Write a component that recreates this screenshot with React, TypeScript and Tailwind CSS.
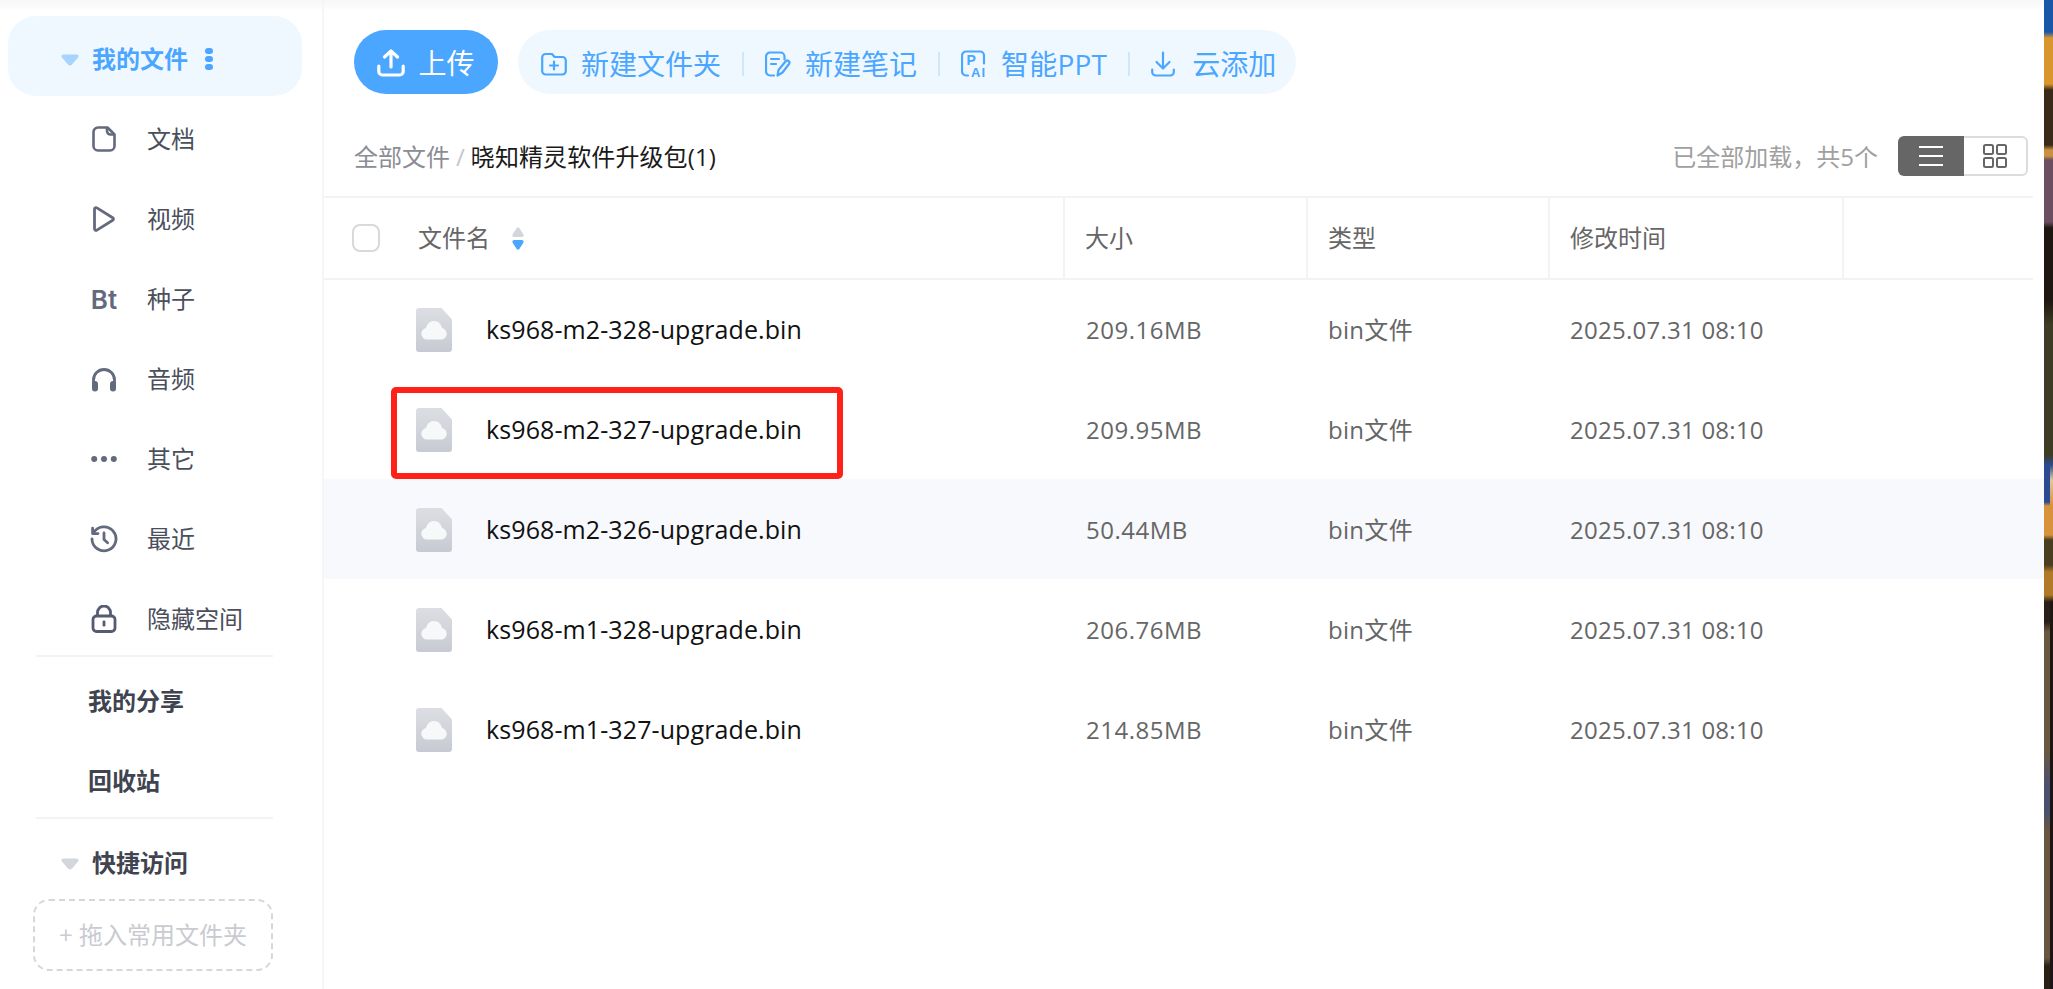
import React from "react";

function Tri({ className }: { className: string }) {
  return (
    <svg width="18" height="12" viewBox="0 0 18 12" className={className}>
      <path d="M2.5 0.5h13c1.8 0 2.6 1.6 1.6 3L11 10.6c-1 1.2-3 1.2-4 0L.9 3.5C-.1 2.1.7.5 2.5.5z" fill="currentColor" />
    </svg>
  );
}

function DocIcon() {
  return (
    <svg width="24" height="26" viewBox="0 0 24 26" fill="none" stroke="#646a7d" strokeWidth="2.6" strokeLinejoin="round">
      <path d="M6 1.5h9.5l7 7V20a4.5 4.5 0 0 1-4.5 4.5H6A4.5 4.5 0 0 1 1.5 20V6A4.5 4.5 0 0 1 6 1.5z" />
      <path d="M15 1.5V5a3.5 3.5 0 0 0 3.5 3.5H22.5" />
    </svg>
  );
}
function PlayIcon() {
  return (
    <svg width="24" height="26" viewBox="0 0 24 26" fill="none" stroke="#646a7d" strokeWidth="2.8" strokeLinejoin="round">
      <path d="M2.5 3.2c0-1.3 1.4-2 2.4-1.3l15.8 9.8c1 .6 1 2 0 2.6L4.9 24.1c-1 .7-2.4 0-2.4-1.3z" />
    </svg>
  );
}
function HeadIcon() {
  return (
    <svg width="26" height="25" viewBox="0 0 26 25" fill="none">
      <path d="M2.5 16V13a10.5 10.5 0 0 1 21 0v3" stroke="#646a7d" strokeWidth="2.8" />
      <rect x="1" y="14" width="6" height="10.5" rx="3" fill="#646a7d" />
      <rect x="19" y="14" width="6" height="10.5" rx="3" fill="#646a7d" />
    </svg>
  );
}
function DotsH() {
  return (
    <svg width="26" height="8" viewBox="0 0 26 8" fill="#646a7d">
      <circle cx="3.2" cy="4" r="3" />
      <circle cx="13" cy="4" r="3" />
      <circle cx="22.8" cy="4" r="3" />
    </svg>
  );
}
function RecentIcon() {
  return (
    <svg width="28" height="28" viewBox="0 0 28 28" fill="none" stroke="#646a7d" strokeWidth="2.8" strokeLinecap="round" strokeLinejoin="round">
      <path d="M3.4 8.2A12 12 0 1 1 2 14" />
      <path d="M2.6 3.2v5.4H8" />
      <path d="M14 8v6.5l3.6 3.2" />
    </svg>
  );
}
function LockIcon() {
  return (
    <svg width="26" height="28" viewBox="0 0 26 28" fill="none">
      <rect x="2" y="11" width="22" height="15.5" rx="3.5" stroke="#565b72" strokeWidth="2.8" />
      <path d="M6.5 11V7.5a6.5 6.5 0 0 1 13 0V11" stroke="#565b72" strokeWidth="2.8" />
      <rect x="11.6" y="15.5" width="2.8" height="6" rx="1.2" fill="#565b72" />
    </svg>
  );
}
function FolderPlus() {
  return (
    <svg width="26" height="24" viewBox="0 0 26 24" fill="none" stroke="#4aa6ff" strokeWidth="2.2" strokeLinecap="round" strokeLinejoin="round">
      <path d="M1.2 5.5A3.5 3.5 0 0 1 4.7 2h6.300l2.600 3h7.700a3.500 3.500 0 0 1 3.500 3.500V19a3.500 3.500 0 0 1-3.500 3.500H4.700A3.500 3.500 0 0 1 1.200 19z" />
      <path d="M13 9.500v8M9 13.500h8" />
    </svg>
  );
}
function NoteIcon() {
  return (
    <svg width="26" height="26" viewBox="0 0 26 26" fill="none" stroke="#4aa6ff" strokeWidth="2.2" strokeLinecap="round" strokeLinejoin="round">
      <path d="M9 24.500H5A4 4 0 0 1 1 20.500V5.500A4 4 0 0 1 5 1.500h10.500a4 4 0 0 1 4 4v3" />
      <path d="M6 8h8M6 13h5" />
      <path d="M12.500 24.500l1-5.500 7-8.500a2 2 0 0 1 3.500 2.500L17.500 21.500z" />
    </svg>
  );
}
function PptIcon() {
  return (
    <svg width="26" height="27" viewBox="0 0 26 27" fill="none">
      <path d="M7 25.500H5A4 4 0 0 1 1 21.500V5.500A4 4 0 0 1 5 1.500h14a4 4 0 0 1 4 4v8" stroke="#4aa6ff" strokeWidth="2.200" strokeLinecap="round" strokeLinejoin="round" />
      <text x="5.500" y="15" fontSize="14" fontWeight="700" fill="#4aa6ff" fontFamily="Liberation Sans, sans-serif">P</text>
      <text x="10" y="26.500" fontSize="13" fontWeight="700" fill="#4aa6ff" fontFamily="Liberation Sans, sans-serif" letterSpacing="1">AI</text>
    </svg>
  );
}
function DownIcon() {
  return (
    <svg width="24" height="26" viewBox="0 0 24 26" fill="none" stroke="#4aa6ff" strokeWidth="2.200" strokeLinecap="round" strokeLinejoin="round">
      <path d="M12 1.500V17M5.500 11l6.500 6.500L18.500 11" />
      <path d="M1.200 18.500v2.500a3.500 3.500 0 0 0 3.500 3.500h14.600a3.500 3.500 0 0 0 3.500-3.500v-2.500" />
    </svg>
  );
}
function UploadIcon() {
  return (
    <svg width="28" height="28" viewBox="0 0 28 28" fill="none" stroke="#fff" strokeWidth="3.200" strokeLinecap="round" strokeLinejoin="round">
      <path d="M14 18V2M7.500 8L14 2l6.500 6" />
      <path d="M1.800 17v5.500A3.500 3.500 0 0 0 5.300 26h17.400a3.500 3.500 0 0 0 3.500-3.500V17" />
    </svg>
  );
}
function FileCloud() {
  return (
    <svg width="36" height="44" viewBox="0 0 36 44">
      <defs>
        <linearGradient id="fc" x1="0" y1="0" x2="0" y2="1">
          <stop offset="0" stopColor="#dcdee3" />
          <stop offset="1" stopColor="#c7cad2" />
        </linearGradient>
      </defs>
      <path d="M3 0h22.500L36 11.500V41a3 3 0 0 1-3 3H3a3 3 0 0 1-3-3V3a3 3 0 0 1 3-3z" fill="url(#fc)" />
      <path d="M11 31.500a5.800 5.800 0 0 1-1-11.500c1-4.400 4.400-7 8-7 4 0 7.200 2.800 8 7a5.800 5.800 0 0 1-1 11.500z" fill="#f7f8f9" />
    </svg>
  );
}

const sideItems: { label: string; icon: React.ReactNode }[] = [
  { label: "文档", icon: <DocIcon /> },
  { label: "视频", icon: <PlayIcon /> },
  { label: "种子", icon: <span className="text-[26px] font-semibold text-[#646a7d] font-['Inter',sans-serif]">Bt</span> },
  { label: "音频", icon: <HeadIcon /> },
  { label: "其它", icon: <DotsH /> },
  { label: "最近", icon: <RecentIcon /> },
  { label: "隐藏空间", icon: <LockIcon /> },
];

const files = [
  ["ks968-m2-328-upgrade.bin", "209.16MB"],
  ["ks968-m2-327-upgrade.bin", "209.95MB"],
  ["ks968-m2-326-upgrade.bin", "50.44MB"],
  ["ks968-m1-328-upgrade.bin", "206.76MB"],
  ["ks968-m1-327-upgrade.bin", "214.85MB"],
];

function Sep() {
  return <span className="w-[2px] h-[24px] bg-[#cfe6fb]" />;
}

export default function App() {
  return (
    <div className="relative flex w-[2053px] h-[989px] overflow-hidden bg-white text-[24px] font-['Open_Sans','Noto_Sans_CJK_SC',sans-serif]">
      <aside className="flex flex-col w-[324px] shrink-0 border-r-2 border-[#f5f6f8] pl-[8px] pt-[16px] bg-[linear-gradient(#f7f7f7,#ffffff_12px)]">
        <div className="flex items-center w-[294px] h-[80px] mb-[3px] pt-[5px] rounded-[28px] bg-[#f0f8ff] pl-[53px]">
          <Tri className="text-[#a5d4ff] mt-[2px]" />
          <span className="ml-[13px] font-bold text-[#4aa6ff]">我的文件</span>
          <span className="ml-[17px] flex flex-col gap-[2px]">
            <span className="w-[8px] h-[6px] rounded-full bg-[#4aa6ff]" />
            <span className="w-[8px] h-[6px] rounded-full bg-[#4aa6ff]" />
            <span className="w-[8px] h-[6px] rounded-full bg-[#4aa6ff]" />
          </span>
        </div>
        {sideItems.map((it) => (
          <div key={it.label} className="flex items-center h-[80px]">
            <span className="flex items-center justify-center w-[40px] ml-[76px]">{it.icon}</span>
            <span className="ml-[23px] text-[#4b4f5c]">{it.label}</span>
          </div>
        ))}
        <div className="w-[237px] h-[2px] ml-[28px] bg-[#f2f3f5] -mt-[4px]" />
        <div className="flex items-center h-[80px] pl-[80px] pt-[7px] font-bold text-[#3f4450]">我的分享</div>
        <div className="flex items-center h-[80px] pl-[80px] pt-[7px] font-bold text-[#3f4450]">回收站</div>
        <div className="w-[237px] h-[2px] ml-[28px] bg-[#f2f3f5]" />
        <div className="flex items-center h-[80px] pl-[53px] pt-[8px]">
          <Tri className="text-[#d3d6dc] mt-[2px]" />
          <span className="ml-[13px] font-bold text-[#3f4450]">快捷访问</span>
        </div>
        <div className="flex items-center justify-center w-[240px] h-[72px] ml-[25px] rounded-[16px] border-2 border-dashed border-[#d5d7db] text-[#c9cbd1] whitespace-nowrap">
          + 拖入常用文件夹
        </div>
      </aside>

      <main className="flex flex-col flex-1 min-w-0">
        <div className="flex items-center h-[124px] pl-[30px] bg-[linear-gradient(#f7f7f7,#ffffff_12px)] shrink-0">
          <div className="flex items-center justify-center gap-[13px] w-[144px] h-[64px] pt-[2px] rounded-full bg-[#4aa6ff] text-white text-[28px]">
            <UploadIcon />
            <span>上传</span>
          </div>
          <div className="flex items-center h-[64px] ml-[20px] pl-[23px] pr-[20px] pt-[3px] rounded-[32px] bg-[#f0f8ff] text-[#4aa6ff] text-[28px] whitespace-nowrap">
            <FolderPlus />
            <span className="ml-[14px]">新建文件夹</span>
            <span className="mx-[21px] flex items-center"><Sep /></span>
            <NoteIcon />
            <span className="ml-[14px]">新建笔记</span>
            <span className="mx-[21px] flex items-center"><Sep /></span>
            <PptIcon />
            <span className="ml-[14px] tracking-[0.2px]">智能PPT</span>
            <span className="mx-[21px] flex items-center"><Sep /></span>
            <DownIcon />
            <span className="ml-[17px]">云添加</span>
          </div>
        </div>

        <div className="flex items-center h-[72px] pl-[30px] pr-[16px] pb-[8px] shrink-0">
          <span className="pt-[2px] text-[#8a8d94]">全部文件</span>
          <span className="mx-[6px] pt-[2px] text-[#c4c6cb]">/</span>
          <span className="pt-[2px] text-[#1a1a1a] tracking-[0.1px]">晓知精灵软件升级包(1)</span>
          <span className="ml-auto pt-[2px] text-[#a0a0a0]">已全部加载，共5个</span>
          <div className="ml-[20px] flex w-[130px] h-[40px]">
            <span className="flex flex-col items-center justify-center gap-[7px] w-[66px] rounded-l-[6px] bg-[#666666]">
              <span className="w-[24px] h-[2px] bg-white" />
              <span className="w-[24px] h-[2px] bg-white" />
              <span className="w-[24px] h-[2px] bg-white" />
            </span>
            <span className="flex items-center justify-center flex-1 rounded-r-[6px] border-2 border-l-0 border-[#dcdcdc]">
              <svg width="24" height="24" viewBox="0 0 24 24" fill="none" stroke="#666" strokeWidth="2">
                <rect x="1" y="1" width="9" height="9" rx="1.500" />
                <rect x="14" y="1" width="9" height="9" rx="1.500" />
                <rect x="1" y="14" width="9" height="9" rx="1.500" />
                <rect x="14" y="14" width="9" height="9" rx="1.500" />
              </svg>
            </span>
          </div>
        </div>

        <div className="flex h-[84px] w-[1709px] shrink-0 border-y-2 border-[#f2f3f4] text-[#666666]">
          <div className="flex items-center w-[741px] pl-[28px] border-r-2 border-[#f2f3f4]">
            <span className="w-[28px] h-[28px] rounded-[8px] border-2 border-[#d9d9d9]" />
            <span className="ml-[38px]">文件名</span>
            <span className="ml-[22px] flex flex-col gap-[1px]">
              <svg width="12" height="11" viewBox="0 0 12 11"><path d="M4.500 1.200a2 2 0 0 1 3 0L11.200 7c.9 1.300.2 3-1.400 3H2.200C.6 10-.1 8.300.8 7z" fill="#d3d6dc" /></svg>
              <svg width="12" height="11" viewBox="0 0 12 11"><path d="M4.500 9.800a2 2 0 0 0 3 0L11.200 4c.9-1.300.2-3-1.400-3H2.200C.6 1-.1 2.700.8 4z" fill="#4aa6ff" /></svg>
            </span>
          </div>
          <div className="flex items-center w-[243px] pl-[20px] border-r-2 border-[#f2f3f4]">大小</div>
          <div className="flex items-center w-[242px] pl-[20px] border-r-2 border-[#f2f3f4]">类型</div>
          <div className="flex items-center w-[294px] pl-[20px] border-r-2 border-[#f2f3f4]">修改时间</div>
        </div>

        {files.map(([name, size], i) => (
          <div key={name} className={`flex items-center h-[100px] pt-[1px] shrink-0 ${i === 0 ? "-mt-[1px]" : ""} ${i === 2 ? "bg-[#f8f9fc]" : ""}`}>
            <span className="ml-[92px] flex"><FileCloud /></span>
            <span className="ml-[34px] w-[599px] text-[25px] tracking-[0.1px] text-[#111111]">{name}</span>
            <span className="w-[243px] pl-[1px] tracking-[0.5px] text-[#666666]">{size}</span>
            <span className="w-[242px] tracking-[0.3px] text-[#666666]">bin文件</span>
            <span className="tracking-[0.25px] text-[#666666]">2025.07.31 08:10</span>
          </div>
        ))}
      </main>

      <div className="flex w-[9px] shrink-0">
        <div className="w-[6px] bg-[linear-gradient(#1a56a8_0,#1a56a8_32px,#d9962f_38px,#d9962f_84px,#3a2a1a_90px,#3a2a1a_145px,#c89040_150px,#c89040_156px,#6b4e60_160px,#6b4e60_222px,#1e1610_228px,#1e1610_300px,#3e3c24_325px,#3e3c24_455px,#2c4a90_465px,#2c4a90_502px,#d8923c_506px,#d8923c_535px,#4a3e20_540px,#4a3e20_565px,#b07a28_572px,#b07a28_595px,#2a2018_602px,#2a2018_622px,#6b5840_632px,#6b5840_750px,#4a5070_785px,#4a5070_810px,#6a5540_830px,#6a5540_958px,#2a2014_966px,#2a2014_989px)]" />
        <div className="w-[3px] bg-[linear-gradient(#1a56a8_0,#1a56a8_32px,#d9962f_38px,#d9962f_84px,#3a2a1a_90px,#3a2a1a_145px,#c89040_150px,#c89040_156px,#6b4e60_160px,#6b4e60_222px,#1e1610_228px,#1e1610_300px,#3e3c24_325px,#3e3c24_455px,#2c4a90_465px,#e0c8a0_480px,#d8923c_506px,#d8923c_535px,#4a3e20_540px,#4a3e20_565px,#b07a28_572px,#b07a28_595px,#1e1610_602px,#1c1418_989px)]" />
      </div>

      <div className="absolute left-[391px] top-[387px] w-[452px] h-[92px] rounded-[5px] border-[6px] border-[#ff2018]" />
    </div>
  );
}
